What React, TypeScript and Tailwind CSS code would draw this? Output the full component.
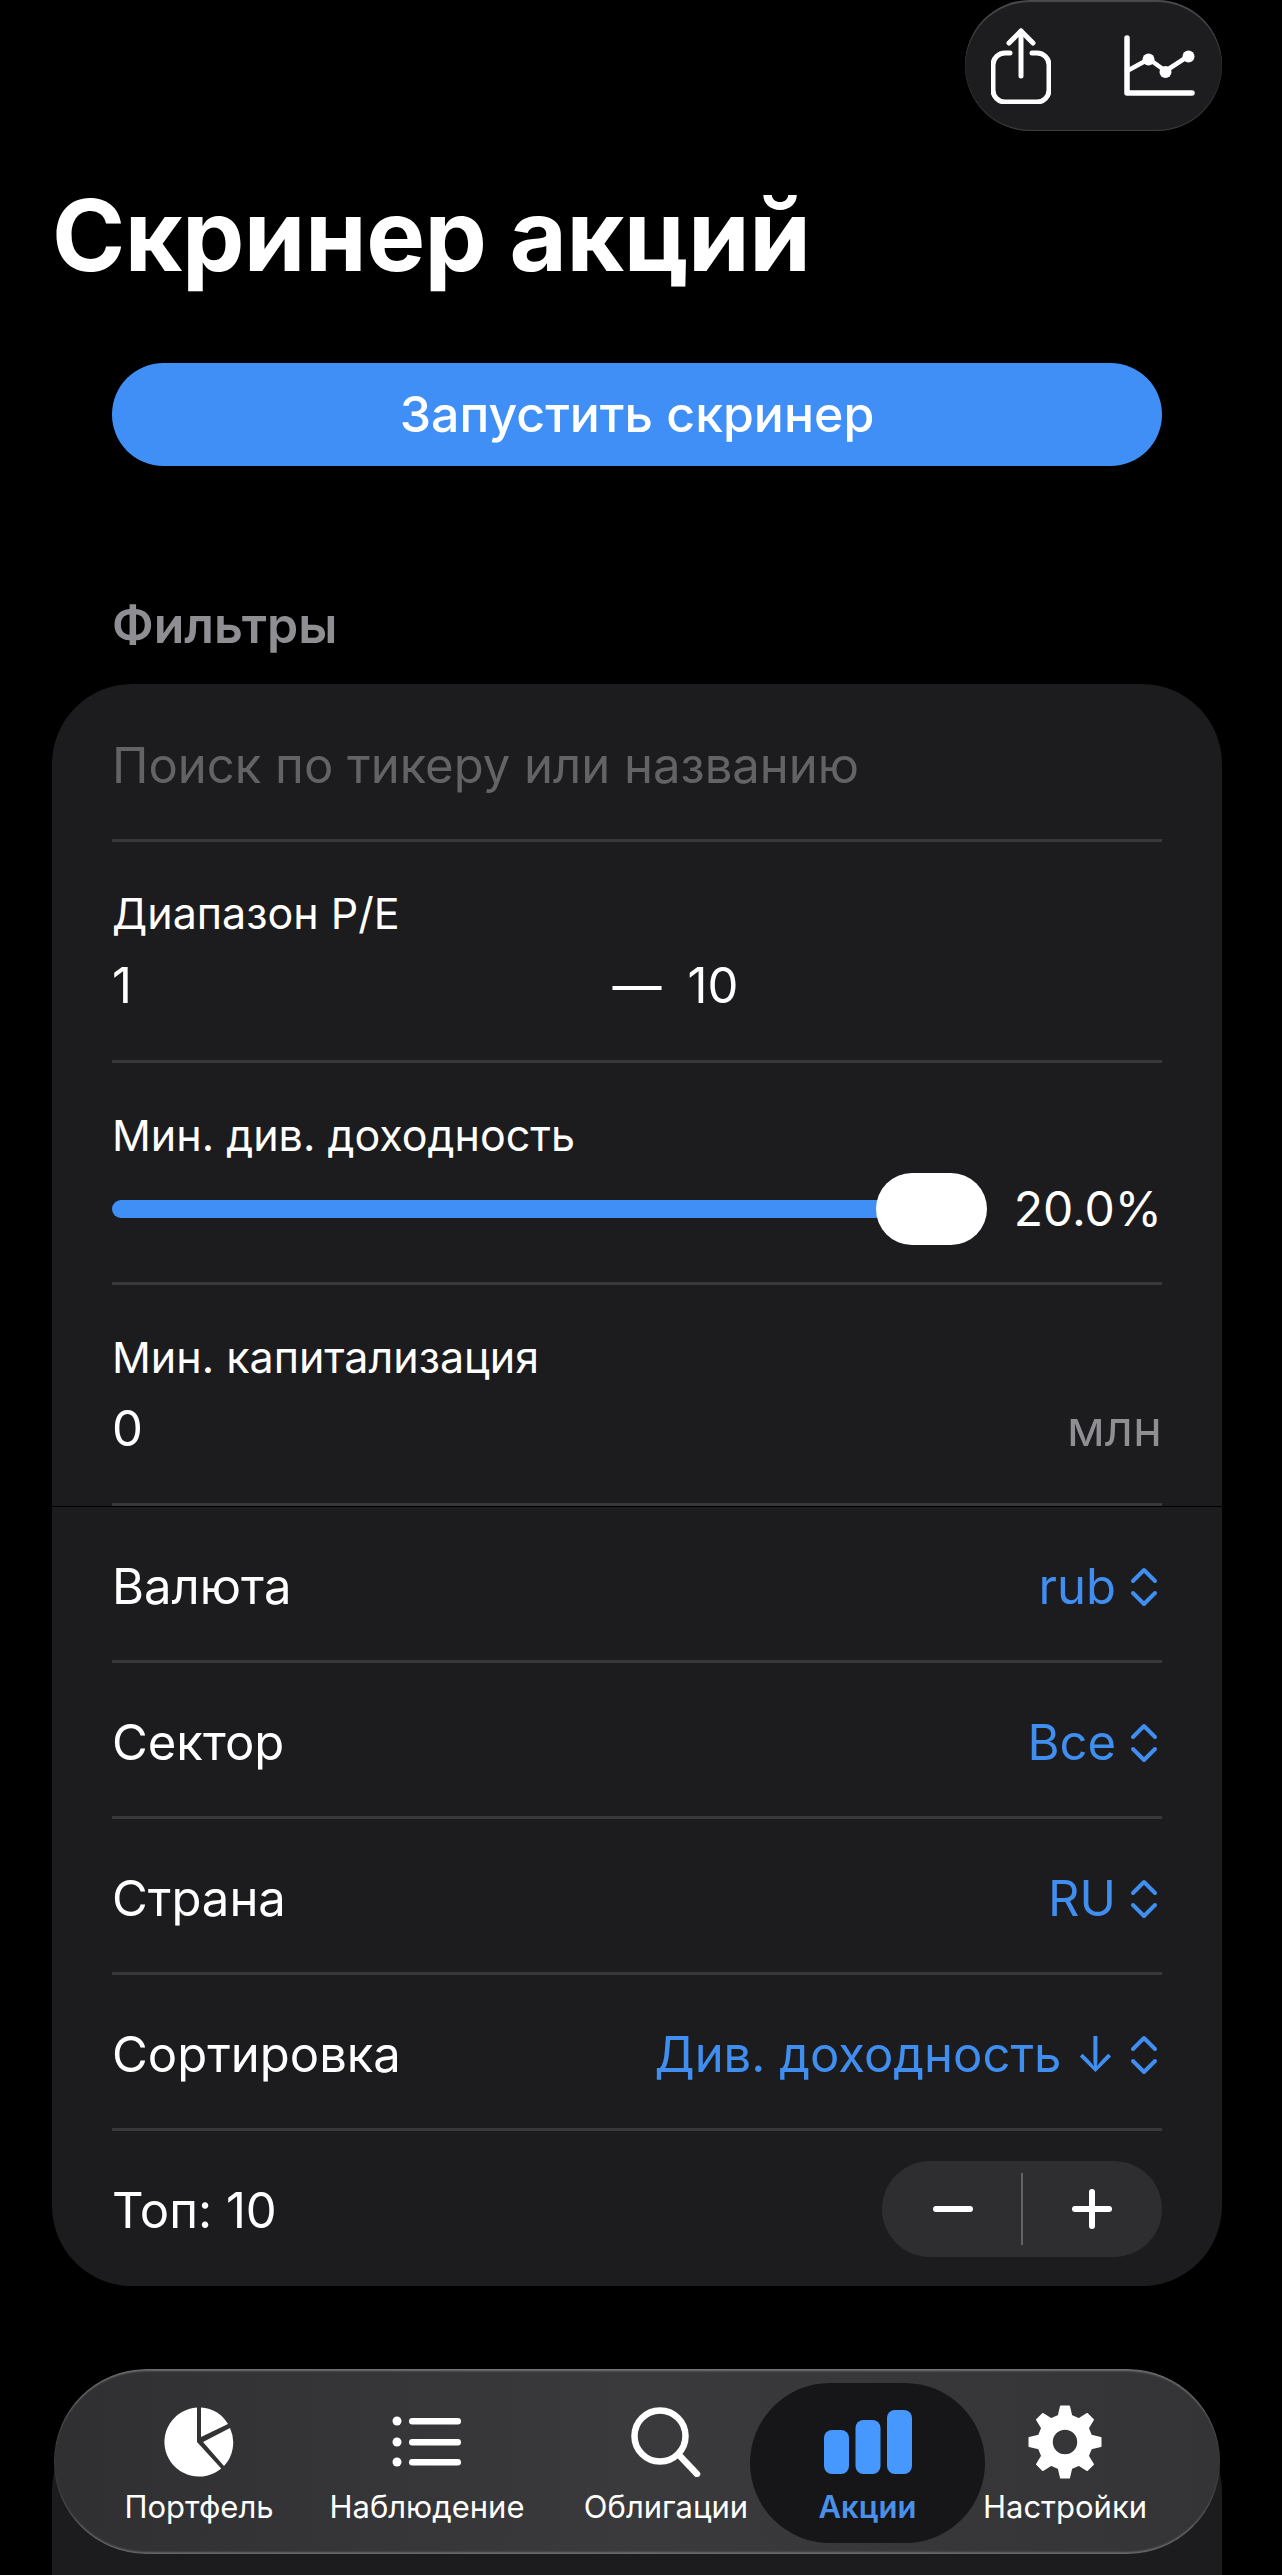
import { ReactNode } from "react";

const gearPath = (() => {
  const pts: string[] = [];
  const teeth = 8;
  for (let i = 0; i < teeth; i++) {
    const a = (i / teeth) * Math.PI * 2;
    const step = Math.PI / teeth;
    const list: [number, number][] = [
      [a - step * 0.42, 32],
      [a - step * 0.3, 36],
      [a + step * 0.3, 36],
      [a + step * 0.42, 32],
      [a + step * 0.62, 27],
      [a + step * 1.38, 27],
    ];
    list.forEach(([t, r]) => {
      pts.push(`${(37 + r * Math.sin(t)).toFixed(2)} ${(37 - r * Math.cos(t)).toFixed(2)}`);
    });
  }
  return `M${pts.join("L")}Z M37 24a13 13 0 1 0 0 26a13 13 0 1 0 0 -26Z`;
})();

function ShareIcon() {
  return (
    <svg width="60" height="76" viewBox="0 0 60 76" fill="none" stroke="white" strokeWidth="5" strokeLinecap="round" strokeLinejoin="round">
      <path d="M19 25H14a12 12 0 0 0-12 12v25a12 12 0 0 0 12 12h32a12 12 0 0 0 12-12V37a12 12 0 0 0-12-12h-5" />
      <path d="M30 3v45" />
      <path d="M18 15L30 3l12 12" />
    </svg>
  );
}

function ChartIcon() {
  return (
    <svg width="72" height="62" viewBox="0 0 72 62" fill="none" stroke="white" strokeWidth="5.500" strokeLinecap="round" strokeLinejoin="round">
      <path d="M3 3v55h65" />
      <path d="M3 36l22-12 16.500 12 23-15" strokeWidth="4.500" />
      <circle cx="24.500" cy="24.500" r="6" fill="white" stroke="none" />
      <circle cx="41.500" cy="37" r="6" fill="white" stroke="none" />
      <circle cx="64.500" cy="21.500" r="6" fill="white" stroke="none" />
    </svg>
  );
}

function Chevrons() {
  return (
    <svg width="28" height="40" viewBox="0 0 28 40" fill="none" stroke="#3f8ef0" strokeWidth="4" strokeLinecap="round" strokeLinejoin="round">
      <path d="M3 14L14 3l11 11" />
      <path d="M3 26l11 11 11-11" />
    </svg>
  );
}

function PieIcon() {
  return (
    <svg width="70" height="70" viewBox="0 0 70 70" fill="white">
      <path d="M33 .6A34.500 34.500 0 1 0 57.200 61.400L33 35Z" />
      <path d="M37 .5A34.500 34.500 0 0 1 64 17L37 30Z" />
      <path d="M39 35L66 21A34.500 34.500 0 0 1 60 59Z" />
    </svg>
  );
}

function ListIcon() {
  return (
    <svg width="70" height="54" viewBox="0 0 70 54" fill="white">
      <circle cx="5" cy="6" r="4.500" />
      <circle cx="5" cy="27" r="4.500" />
      <circle cx="5" cy="47" r="4.500" />
      <rect x="17" y="3" width="52" height="6.500" rx="3.250" />
      <rect x="17" y="24" width="52" height="6.500" rx="3.250" />
      <rect x="17" y="44" width="52" height="6.500" rx="3.250" />
    </svg>
  );
}

function SearchIcon() {
  return (
    <svg width="70" height="70" viewBox="0 0 70 70" fill="none" stroke="white" strokeWidth="6.500" strokeLinecap="round">
      <circle cx="29" cy="29" r="25.500" />
      <path d="M48 48l18 19" />
    </svg>
  );
}

function BarsIcon() {
  return (
    <svg width="88" height="64" viewBox="0 0 88 64" fill="#4698ff">
      <rect x="0" y="20" width="25" height="44" rx="8" />
      <rect x="31.500" y="10" width="25" height="54" rx="8" />
      <rect x="63" y="0" width="25" height="64" rx="8" />
    </svg>
  );
}

function GearIcon() {
  return (
    <svg width="74" height="74" viewBox="0 0 74 74">
      <path d={gearPath} fill="white" stroke="white" strokeWidth="1.500" strokeLinejoin="round" fillRule="evenodd" />
    </svg>
  );
}

function Divider() {
  return <div className="mx-[60px] h-[3px] bg-[#38383a]" />;
}

function PickerRow({ label, value }: { label: string; value: string }) {
  return (
    <>
      <div className="flex h-[153px] items-center justify-between px-[60px] pt-[6px]">
        <span className="text-[49px]">{label}</span>
        <span className="flex items-center gap-[14px] pr-[4px] text-[49px] text-[#3f8ef0]">
          {value}
          <Chevrons />
        </span>
      </div>
      <Divider />
    </>
  );
}

function TabItem({ icon, label, active }: { icon: ReactNode; label: string; active?: boolean }) {
  return (
    <div className={`flex h-[160px] flex-col items-center ${active ? "rounded-[80px] bg-[#161618] text-[#4a90e8] font-semibold" : "text-white"}`}>
      <div className="flex h-[104px] w-full items-center justify-center pt-[14px]">{icon}</div>
      <span className="whitespace-nowrap text-[31px] leading-[40px]">{label}</span>
    </div>
  );
}

export default function App() {
  return (
    <div className="relative h-[2575px] overflow-hidden bg-black font-['Inter','Noto_Sans',sans-serif] text-white">
      <div className="flex justify-end pr-[60px]">
        <div className="flex h-[131px] w-[257px] items-center justify-between rounded-[65px] bg-[#1d1d1f] pl-[26px] pr-[26px] shadow-[inset_0_2px_1px_rgba(255,255,255,0.2),inset_0_-1px_1px_rgba(255,255,255,0.16)]">
          <ShareIcon />
          <ChartIcon />
        </div>
      </div>

      <h1 className="mt-[48px] pl-[52px] text-[99px] font-bold leading-[112px] tracking-[-0.5px]">Скринер акций</h1>

      <button className="mx-[112px] mt-[72px] block h-[103px] w-[1050px] rounded-[52px] bg-[#3f8ff7] text-[50px] font-medium">
        Запустить скринер
      </button>

      <div className="mt-[130px] pl-[112px] text-[50px] font-semibold leading-[58px] text-[#8e8e93]">Фильтры</div>

      <div className="mx-[52px] mt-[30px] w-[1170px] rounded-[80px] bg-[#1c1c1e]">
        <div className="border-b border-black">
          <div className="flex h-[155px] items-center px-[60px] pt-[8px] text-[49px] text-[#636366]">Поиск по тикеру или названию</div>
          <Divider />

          <div className="h-[218px] px-[60px] pt-[47px]">
            <div className="text-[43px] leading-[48px]">Диапазон P/E</div>
            <div className="mt-[24px] flex gap-[26px] text-[49px] leading-[50px]">
              <span className="flex-1">1</span>
              <span>—</span>
              <span className="flex-1">10</span>
            </div>
          </div>
          <Divider />

          <div className="h-[219px] px-[60px] pt-[48px]">
            <div className="text-[43px] leading-[48px]">Мин. див. доходность</div>
            <div className="mt-[14px] flex items-center">
              <div className="h-[18px] w-[772px] rounded-l-[9px] bg-[#3f8ff7]" />
              <div className="-ml-[3px] h-[72px] w-[111px] rounded-[36px] bg-white" />
              <span className="ml-[27px] text-[48px]">20.0%</span>
            </div>
          </div>
          <Divider />

          <div className="h-[218px] px-[60px] pt-[48px]">
            <div className="text-[43px] leading-[48px]">Мин. капитализация</div>
            <div className="mt-[23px] flex justify-between text-[49px] leading-[50px]">
              <span>0</span>
              <span className="text-[#8e8e93]">млн</span>
            </div>
          </div>
          <Divider />
        </div>

        <PickerRow label="Валюта" value="rub" />
        <PickerRow label="Сектор" value="Все" />
        <PickerRow label="Страна" value="RU" />
        <PickerRow label="Сортировка" value="Див. доходность ↓" />

        <div className="flex h-[155px] items-center justify-between pl-[60px] pr-[60px]">
          <span className="pt-[4px] text-[49px]">Топ: 10</span>
          <div className="flex h-[96px] w-[280px] items-center rounded-[48px] bg-[#2e2e31]">
            <div className="flex flex-1 justify-center pl-[2px]">
              <svg width="40" height="6" viewBox="0 0 40 6"><rect width="40" height="6" rx="3" fill="white" /></svg>
            </div>
            <div className="h-[72px] w-[2px] bg-[#636366]" />
            <div className="flex flex-1 justify-center pr-[2px]">
              <svg width="40" height="40" viewBox="0 0 40 40" fill="white">
                <rect y="17" width="40" height="6" rx="3" />
                <rect x="17" width="6" height="40" rx="3" />
              </svg>
            </div>
          </div>
        </div>
      </div>

      <div className="mx-[52px] mt-[125px] h-[400px] w-[1170px] rounded-[80px] bg-[#1c1c1e] pl-[70px] pt-[28px] text-[34px] leading-[40px] text-[#48484a]">
        Показано 5 из 100
      </div>

      {/* floating tab bar */}
      <div className="absolute left-[54px] top-[2369px] h-[185px] w-[1166px] rounded-[93px] bg-[#373739] bg-gradient-to-r from-[#303032] via-[#3a3a3c] to-[#343436] pt-[14px] shadow-[inset_0_3px_2px_-1px_rgba(255,255,255,0.3),inset_0_-3px_2px_-1px_rgba(255,255,255,0.26)]">
        <div className="grid grid-cols-[146px_310px_168px_235px_160px] pl-[72px]">
          <TabItem icon={<PieIcon />} label="Портфель" />
          <TabItem icon={<ListIcon />} label="Наблюдение" />
          <TabItem icon={<SearchIcon />} label="Облигации" />
          <TabItem icon={<BarsIcon />} label="Акции" active />
          <TabItem icon={<GearIcon />} label="Настройки" />
        </div>
      </div>
    </div>
  );
}
